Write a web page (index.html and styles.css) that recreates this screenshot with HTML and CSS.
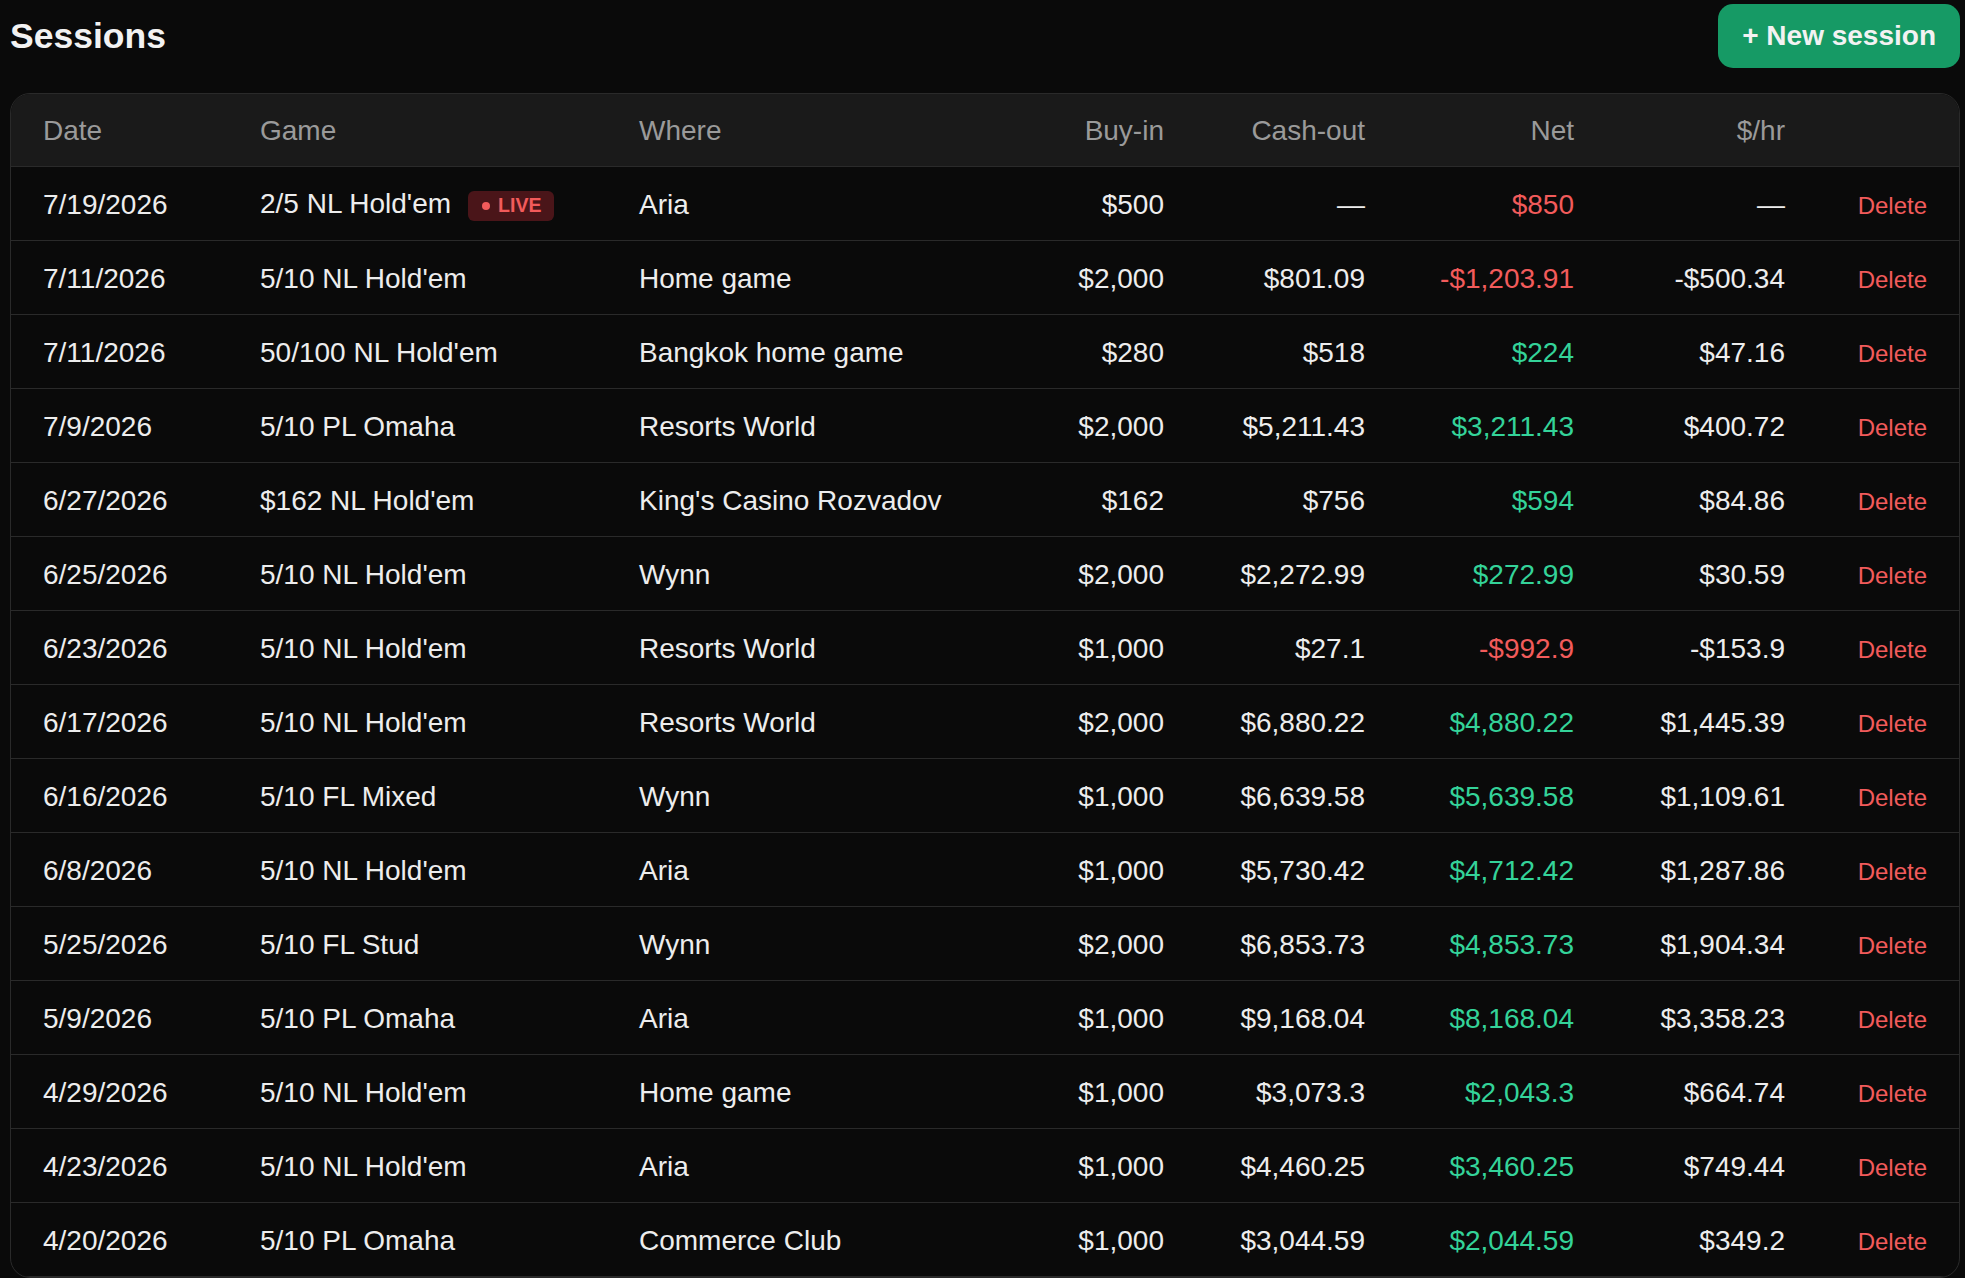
FILE: index.html
```html
<!DOCTYPE html>
<html lang="en">
<head>
  <meta charset="UTF-8" />
  <meta name="viewport" content="width=device-width, initial-scale=1.0"/>
  <title>Sessions</title>
  <link rel="stylesheet" href="styles.css">
</head>
<body>
  <div class="page">
    <div class="top">
      <h1>Sessions</h1>
      <button class="new-btn">+ New session</button>
    </div>

    <div class="card">
      <table class="sessions">
        <colgroup>
          <col class="c-date" />
          <col class="c-game" />
          <col />
          <col class="c-buyin" />
          <col class="c-cashout" />
          <col class="c-net" />
          <col class="c-rate" />
          <col class="c-action" />
        </colgroup>
        <thead>
          <tr>
            <th>Date</th>
            <th>Game</th>
            <th>Where</th>
            <th class="num">Buy-in</th>
            <th class="num">Cash-out</th>
            <th class="num">Net</th>
            <th class="num">$/hr</th>
            <th></th>
          </tr>
        </thead>
        <tbody id="session-rows"></tbody>
      </table>
    </div>
  </div>

  <script>
    const sessions = [
      { date: '7/19/2026', game: "2/5 NL Hold'em", live: true, where: 'Aria', buyin: '$500', cashout: '—', net: '$850', neg: true, rate: '—' },
      { date: '7/11/2026', game: "5/10 NL Hold'em", where: 'Home game', buyin: '$2,000', cashout: '$801.09', net: '-$1,203.91', neg: true, rate: '-$500.34' },
      { date: '7/11/2026', game: "50/100 NL Hold'em", where: 'Bangkok home game', buyin: '$280', cashout: '$518', net: '$224', rate: '$47.16' },
      { date: '7/9/2026', game: '5/10 PL Omaha', where: 'Resorts World', buyin: '$2,000', cashout: '$5,211.43', net: '$3,211.43', rate: '$400.72' },
      { date: '6/27/2026', game: "$162 NL Hold'em", where: "King's Casino Rozvadov", buyin: '$162', cashout: '$756', net: '$594', rate: '$84.86' },
      { date: '6/25/2026', game: "5/10 NL Hold'em", where: 'Wynn', buyin: '$2,000', cashout: '$2,272.99', net: '$272.99', rate: '$30.59' },
      { date: '6/23/2026', game: "5/10 NL Hold'em", where: 'Resorts World', buyin: '$1,000', cashout: '$27.1', net: '-$992.9', neg: true, rate: '-$153.9' },
      { date: '6/17/2026', game: "5/10 NL Hold'em", where: 'Resorts World', buyin: '$2,000', cashout: '$6,880.22', net: '$4,880.22', rate: '$1,445.39' },
      { date: '6/16/2026', game: '5/10 FL Mixed', where: 'Wynn', buyin: '$1,000', cashout: '$6,639.58', net: '$5,639.58', rate: '$1,109.61' },
      { date: '6/8/2026', game: "5/10 NL Hold'em", where: 'Aria', buyin: '$1,000', cashout: '$5,730.42', net: '$4,712.42', rate: '$1,287.86' },
      { date: '5/25/2026', game: '5/10 FL Stud', where: 'Wynn', buyin: '$2,000', cashout: '$6,853.73', net: '$4,853.73', rate: '$1,904.34' },
      { date: '5/9/2026', game: '5/10 PL Omaha', where: 'Aria', buyin: '$1,000', cashout: '$9,168.04', net: '$8,168.04', rate: '$3,358.23' },
      { date: '4/29/2026', game: "5/10 NL Hold'em", where: 'Home game', buyin: '$1,000', cashout: '$3,073.3', net: '$2,043.3', rate: '$664.74' },
      { date: '4/23/2026', game: "5/10 NL Hold'em", where: 'Aria', buyin: '$1,000', cashout: '$4,460.25', net: '$3,460.25', rate: '$749.44' },
      { date: '4/20/2026', game: '5/10 PL Omaha', where: 'Commerce Club', buyin: '$1,000', cashout: '$3,044.59', net: '$2,044.59', rate: '$349.2' }
    ];

    function renderSessions() {
      const body = document.getElementById('session-rows');
      body.innerHTML = '';

      sessions.forEach(s => {
        const row = document.createElement('tr');
        const badge = s.live ? '<span class="live"><span class="dot"></span>LIVE</span>' : '';
        row.innerHTML = `
          <td>${s.date}</td>
          <td>${s.game}${badge}</td>
          <td>${s.where}</td>
          <td class="num">${s.buyin}</td>
          <td class="num">${s.cashout}</td>
          <td class="num ${s.neg ? 'neg' : 'pos'}">${s.net}</td>
          <td class="num">${s.rate}</td>
          <td class="num"><button class="delete-btn">Delete</button></td>
        `;
        body.appendChild(row);
      });
    }

    renderSessions();
  </script>
</body>
</html>
```

FILE: styles.css
```css
body {
  margin: 0;
  background-color: #0a0a0a;
  color: #ededed;
  font-family: "Liberation Sans", Arial, sans-serif;
}
.page {
  padding: 4px 5px 0 10px;
}
.top {
  display: flex;
  justify-content: space-between;
  align-items: center;
}
h1 {
  margin: 0;
  font-size: 35.5px;
  line-height: 64px;
  font-weight: bold;
  color: #f2f2f2;
}
.new-btn {
  padding: 16px 24px;
  font-family: inherit;
  font-size: 28px;
  line-height: 32px;
  font-weight: bold;
  color: #f2f2f2;
  background-color: #169a65;
  border: none;
  border-radius: 15px;
  cursor: pointer;
}
.card {
  margin-top: 25px;
  border: 1px solid #2a2a2a;
  border-radius: 20px;
  overflow: hidden;
}
.sessions {
  width: 100%;
  table-layout: fixed;
  border-collapse: collapse;
  font-size: 28px;
}
.c-date { width: 217px; }
.c-game { width: 379px; }
.c-buyin { width: 190px; }
.c-cashout { width: 201px; }
.c-net { width: 209px; }
.c-rate { width: 211px; }
.c-action { width: 142px; }
th, td {
  padding: 2px 32px 0;
  text-align: left;
  white-space: nowrap;
}
th {
  height: 70px;
  font-weight: normal;
  color: #9a9a9a;
  background-color: #1a1a1a;
  border-bottom: 1px solid #2a2a2a;
}
td {
  height: 71px;
  border-bottom: 1px solid #2a2a2a;
}
.num {
  text-align: right;
}
.pos {
  color: #34d399;
}
.neg {
  color: #f25b5b;
}
.live {
  display: inline-flex;
  align-items: center;
  gap: 8px;
  height: 30px;
  margin-left: 17px;
  padding: 0 13px 0 14px;
  vertical-align: middle;
  font-size: 19.5px;
  line-height: 1;
  font-weight: bold;
  color: #f25b5b;
  background-color: #4a1519;
  border-radius: 6px;
}
.dot {
  width: 8px;
  height: 8px;
  border-radius: 50%;
  background-color: #f25b5b;
}
.delete-btn {
  padding: 0;
  font-family: inherit;
  font-size: 24px;
  color: #f25b5b;
  background: none;
  border: none;
  cursor: pointer;
}
```
